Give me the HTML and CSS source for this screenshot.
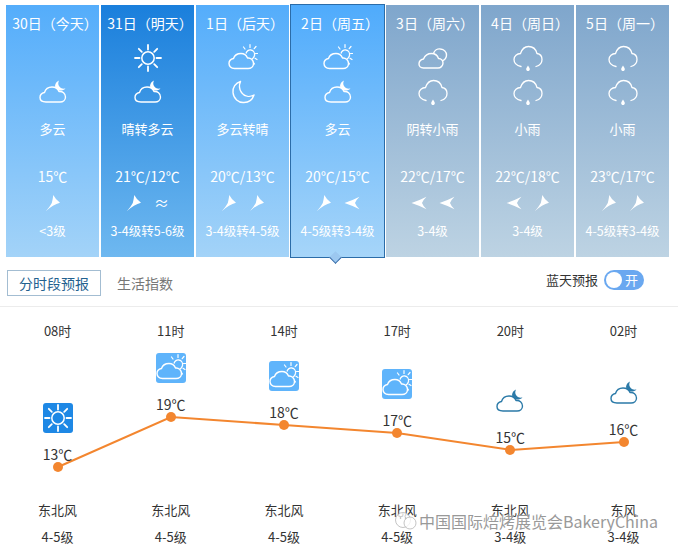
FILE: index.html
```html
<!DOCTYPE html>
<html lang="zh-CN">

<head>
    <meta charset="UTF-8">
    <meta name="viewport" content="width=device-width, initial-scale=1.0">
    <title>天气预报</title>
    <link rel="stylesheet" href="styles.css">
</head>

<body>
    <svg class="defs">
        <defs>
            <symbol id="sun" viewBox="0 0 30 30">
                <circle cx="15" cy="15" r="6.200" fill="none" stroke="currentColor" stroke-width="1.500" />
                <path d="M15 2v4.500M15 23.500v4.500M2 15h4.500M23.500 15h4.500M5.800 5.800l3 3M21.200 21.200l3 3M5.800 24.200l3-3M21.200 8.800l3-3" stroke="currentColor" stroke-width="1.800" stroke-linecap="round" fill="none" />
            </symbol>
            <symbol id="cloudmoon" viewBox="0 0 30 30">
                <path d="M8 25C4 25 2 23 2 20.500C2 18 4 16 6.500 15.500C7.500 12 10.500 10 14 10C17.500 10 20 12 21 14.500C24.500 14 27.500 16.500 27.500 20C27.500 23 25 25 22 25Z" fill="none" stroke="currentColor" stroke-width="1.400" stroke-linejoin="round" />
                <path d="M21 3.500C17.500 5 16 9 18 11.500C20 14 24.500 14.500 27.500 11.500C24.500 12 22 11 21 9C20 7.500 20 5.500 21 3.500Z" fill="currentColor" />
            </symbol>
            <symbol id="cloudsun" viewBox="0 0 30 30">
                <path d="M6.500 25.500C3 25.500 1 23 1 20.500C1 18 3 16 5.500 15.500C6.500 12.500 9.500 10.500 13 10.500C16 10.500 18.500 12.500 19.500 15C22.500 14.500 25.500 17 25.500 20.500C25.500 23.500 23 25.500 20 25.500Z" fill="none" stroke="currentColor" stroke-width="1.400" stroke-linejoin="round" />
                <path d="M18 10.500C18.500 8 21 6.500 23 7C25.500 7.500 27 10 26.500 12.500C26 14.500 25 15.500 24 16" fill="none" stroke="currentColor" stroke-width="1.300" />
                <path d="M22 1.500v3M15.500 4l1.500 2M28 3.500l-1.800 2.200M29.500 10.500h-2M29 16.500l-2-1.200M26.500 21l-.8-1.200" stroke="currentColor" stroke-width="1.200" stroke-linecap="round" fill="none" />
            </symbol>
            <symbol id="moon" viewBox="0 0 30 30">
                <path d="M12.500 4.500C7.500 6 4.500 10.500 5 15.500C5.500 21.500 10.500 26 16 25.500C20.500 25.500 24.500 22.500 26 18C21.500 20.500 16.500 19.500 13.500 15.500C11 12 11 8 12.500 4.500Z" fill="none" stroke="currentColor" stroke-width="1.400" stroke-linejoin="round" />
            </symbol>
            <symbol id="overcast" viewBox="0 0 30 30">
                <path d="M5.500 25C2.500 25 1 23 1 21C1 18.500 3 16.500 5.500 16C7 12.500 10 10.500 13.500 10.500C17 10.500 19.500 12.500 20.500 15.500C23 15.500 25 17.500 25 20C25 23 22.500 25 20 25Z" fill="none" stroke="currentColor" stroke-width="1.400" stroke-linejoin="round" />
                <path d="M15.500 10.500C16.500 7.500 19.500 5.500 22.500 6C26 6.500 28.500 9 28.500 12C28.500 15 26.500 17 24 18" fill="none" stroke="currentColor" stroke-width="1.400" />
            </symbol>
            <symbol id="rain" viewBox="0 0 30 30">
                <path d="M8 23.500C3.500 22.500 1 20 1 16.500C1 13 4 10.500 7.500 10.500C9 6 12 3.500 15.500 3.500C20 3.500 23 6.500 24 10.500C27 11 29 13.500 29 16.500C29 20 26.500 22.500 23 23.500" fill="none" stroke="currentColor" stroke-width="1.300" stroke-linecap="round" />
                <path d="M15 22.500C15.800 24 16.800 25 16.800 26.200C16.800 27.200 16 28 15 28C14 28 13.200 27.200 13.200 26.200C13.200 25 14.200 24 15 22.500Z" fill="currentColor" />
            </symbol>
            <symbol id="arrow_ne" viewBox="0 0 16 18">
                <path d="M8.300 1Q10.500 5.500 15 8.700Q8 10.500 1 17Q5 12.500 6.800 9Q7.800 5 8.300 1Z" fill="currentColor" />
            </symbol>
            <symbol id="arrow_w" viewBox="0 0 16 18">
                <path d="M.5 9Q8 6.500 15.500 2.700Q12 6 11 9Q12 12 15.500 15.200Q8 11.500 .5 9Z" fill="currentColor" />
            </symbol>
        </defs>
    </svg>

    <div class="week">
        <div class="day">
            <p class="date">30日（今天）</p>
            <div class="icons"><svg class="ico"><use href="#cloudmoon" /></svg></div>
            <p class="wea">多云</p>
            <p class="tem">15℃</p>
            <div class="winds"><svg class="arr"><use href="#arrow_ne" /></svg></div>
            <p class="lev">&lt;3级</p>
        </div>
        <div class="day day_next">
            <p class="date">31日（明天）</p>
            <div class="icons"><svg class="ico"><use href="#sun" /></svg><svg class="ico"><use href="#cloudmoon" /></svg></div>
            <p class="wea">晴转多云</p>
            <p class="tem">21℃/12℃</p>
            <div class="winds"><svg class="arr"><use href="#arrow_ne" /></svg><span class="calm">≈</span></div>
            <p class="lev">3-4级转5-6级</p>
        </div>
        <div class="day">
            <p class="date">1日（后天）</p>
            <div class="icons"><svg class="ico"><use href="#cloudsun" /></svg><svg class="ico"><use href="#moon" /></svg></div>
            <p class="wea">多云转晴</p>
            <p class="tem">20℃/13℃</p>
            <div class="winds"><svg class="arr"><use href="#arrow_ne" /></svg><svg class="arr"><use href="#arrow_ne" /></svg></div>
            <p class="lev">3-4级转4-5级</p>
        </div>
        <div class="day day_sel">
            <p class="date">2日（周五）</p>
            <div class="icons"><svg class="ico"><use href="#cloudsun" /></svg><svg class="ico"><use href="#cloudmoon" /></svg></div>
            <p class="wea">多云</p>
            <p class="tem">20℃/15℃</p>
            <div class="winds"><svg class="arr"><use href="#arrow_ne" /></svg><svg class="arr"><use href="#arrow_w" /></svg></div>
            <p class="lev">4-5级转3-4级</p>
        </div>
        <div class="day day_far">
            <p class="date">3日（周六）</p>
            <div class="icons"><svg class="ico"><use href="#overcast" /></svg><svg class="ico"><use href="#rain" /></svg></div>
            <p class="wea">阴转小雨</p>
            <p class="tem">22℃/17℃</p>
            <div class="winds"><svg class="arr"><use href="#arrow_w" /></svg><svg class="arr"><use href="#arrow_w" /></svg></div>
            <p class="lev">3-4级</p>
        </div>
        <div class="day day_far">
            <p class="date">4日（周日）</p>
            <div class="icons"><svg class="ico"><use href="#rain" /></svg><svg class="ico"><use href="#rain" /></svg></div>
            <p class="wea">小雨</p>
            <p class="tem">22℃/18℃</p>
            <div class="winds"><svg class="arr"><use href="#arrow_w" /></svg><svg class="arr"><use href="#arrow_ne" /></svg></div>
            <p class="lev">3-4级</p>
        </div>
        <div class="day day_far">
            <p class="date">5日（周一）</p>
            <div class="icons"><svg class="ico"><use href="#rain" /></svg><svg class="ico"><use href="#rain" /></svg></div>
            <p class="wea">小雨</p>
            <p class="tem">23℃/17℃</p>
            <div class="winds"><svg class="arr"><use href="#arrow_ne" /></svg><svg class="arr"><use href="#arrow_ne" /></svg></div>
            <p class="lev">4-5级转3-4级</p>
        </div>
    </div>

    <div class="tabs">
        <span class="tab tab_on">分时段预报</span>
        <span class="tab">生活指数</span>
        <div class="sky">
            <span>蓝天预报</span>
            <span class="switch"><i></i>开</span>
        </div>
    </div>

    <div class="chart">
        <!-- 折线 -->
        <svg class="line" width="678" height="245">
            <polyline points="58,160 171,110 284,118 397,126 511,143 624,135" fill="none" stroke="#f3862f" stroke-width="2" />
        </svg>
        <div class="hour">
            <p class="h_time">08时</p>
            <div class="h_box" style="padding-top: 62px"><div class="h_ico h_sun"><svg><use href="#sun" /></svg></div><p class="h_tem">13℃</p><i class="dot"></i></div>
            <p class="h_wind">东北风</p>
            <p class="h_lev">4-5级</p>
        </div>
        <div class="hour">
            <p class="h_time">11时</p>
            <div class="h_box" style="padding-top: 12px"><div class="h_ico h_cloud"><svg><use href="#cloudsun" /></svg></div><p class="h_tem">19℃</p><i class="dot"></i></div>
            <p class="h_wind">东北风</p>
            <p class="h_lev">4-5级</p>
        </div>
        <div class="hour">
            <p class="h_time">14时</p>
            <div class="h_box" style="padding-top: 20px"><div class="h_ico h_cloud"><svg><use href="#cloudsun" /></svg></div><p class="h_tem">18℃</p><i class="dot"></i></div>
            <p class="h_wind">东北风</p>
            <p class="h_lev">4-5级</p>
        </div>
        <div class="hour">
            <p class="h_time">17时</p>
            <div class="h_box" style="padding-top: 28px"><div class="h_ico h_cloud"><svg><use href="#cloudsun" /></svg></div><p class="h_tem">17℃</p><i class="dot"></i></div>
            <p class="h_wind">东北风</p>
            <p class="h_lev">4-5级</p>
        </div>
        <div class="hour">
            <p class="h_time">20时</p>
            <div class="h_box" style="padding-top: 45px"><div class="h_ico h_night"><svg><use href="#cloudmoon" /></svg></div><p class="h_tem">15℃</p><i class="dot"></i></div>
            <p class="h_wind">东北风</p>
            <p class="h_lev">3-4级</p>
        </div>
        <div class="hour">
            <p class="h_time">02时</p>
            <div class="h_box" style="padding-top: 37px"><div class="h_ico h_night"><svg><use href="#cloudmoon" /></svg></div><p class="h_tem">16℃</p><i class="dot"></i></div>
            <p class="h_wind">东风</p>
            <p class="h_lev">3-4级</p>
        </div>
        <!-- 水印 -->
        <div class="mark">
            <svg width="24" height="20" viewBox="0 0 24 20">
                <circle cx="9" cy="9" r="7.500" fill="#fff" fill-opacity=".75" stroke="#b5b5b5" stroke-width=".8" />
                <circle cx="16" cy="12" r="6" fill="#fff" fill-opacity=".75" stroke="#b5b5b5" stroke-width=".8" />
                <circle cx="6.500" cy="7" r=".8" fill="#aaa" />
                <circle cx="11.500" cy="7" r=".8" fill="#aaa" />
            </svg>
            <span>中国国际焙烤展览会BakeryChina</span>
        </div>
    </div>
</body>

</html>
```

FILE: styles.css
```css
* {
    padding: 0;
    margin: 0;
    box-sizing: border-box;
}

body {
    width: 678px;
    height: 552px;
    overflow: hidden;
    background: #fff;
    font-family: "Noto Sans CJK SC", "Liberation Sans", sans-serif;
    font-size: 14px;
    color: #333;
}

.defs {
    display: none;
}

.week {
    display: flex;
    gap: 2px;
    margin: 5px 0 0 6px;
    height: 252px;
}

.day {
    position: relative;
    width: 93px;
    height: 252px;
    color: #fff;
    text-align: center;
    background: linear-gradient(#54adfb, #a3d3f8);
}

.day_next {
    background: linear-gradient(#1a7fdc, #6eb8f0);
}

.day_far {
    background: linear-gradient(#7fa6cc, #bdd3e3);
}

.day_sel {
    width: 95px;
    height: 254px;
    margin: -1px -1px 0 -1px;
    border: 1px solid #2b6ca8;
    background: linear-gradient(#4fabfc, #a6d5f9);
}

.day_sel::after {
    content: "";
    position: absolute;
    left: 40px;
    bottom: -5px;
    width: 8px;
    height: 8px;
    transform: rotate(45deg);
    border-right: 1px solid #3d6fa8;
    border-bottom: 1px solid #3d6fa8;
    background: #9cc8f0;
}

.date {
    height: 20px;
    margin-top: 8px;
    padding-left: 5px;
    line-height: 20px;
    white-space: nowrap;
}

.icons {
    display: flex;
    flex-direction: column;
    justify-content: flex-end;
    align-items: center;
    gap: 4px;
    height: 74px;
}

.ico {
    width: 30px;
    height: 30px;
}

.wea {
    height: 20px;
    margin-top: 12px;
    line-height: 20px;
    font-size: 13px;
}

.tem {
    height: 20px;
    margin-top: 27px;
    line-height: 20px;
    font-size: 14px;
    white-space: nowrap;
}

.winds {
    display: flex;
    justify-content: center;
    align-items: center;
    gap: 12px;
    height: 18px;
    margin-top: 8px;
}

.arr {
    width: 16px;
    height: 18px;
}

.calm {
    width: 16px;
    font-size: 15px;
    line-height: 18px;
}

.lev {
    height: 18px;
    margin-top: 10px;
    line-height: 18px;
    font-size: 12.500px;
    white-space: nowrap;
}

.tabs {
    display: flex;
    align-items: center;
    height: 50px;
    padding: 0 7px;
    border-bottom: 1px solid #ececec;
}

.tab {
    height: 26px;
    margin-top: 2px;
    line-height: 24px;
    font-size: 14px;
    color: #777;
    border: 1px solid transparent;
}

.tab_on {
    width: 94px;
    margin-right: 15px;
    text-align: center;
    color: #23618f;
    border-color: #a3bdd2;
}

.sky {
    display: flex;
    align-items: center;
    gap: 6px;
    margin-left: auto;
    margin-right: 27px;
    margin-bottom: 4px;
    font-size: 13px;
}

.switch {
    display: flex;
    align-items: center;
    width: 40px;
    height: 20px;
    padding-left: 2px;
    border-radius: 10px;
    background: #6aa8f0;
    color: #fff;
    font-size: 13px;
}

.switch i {
    width: 16px;
    height: 16px;
    margin-right: 3px;
    border-radius: 50%;
    background: #fff;
}

.chart {
    position: relative;
    display: flex;
    padding-left: 1px;
}

.line {
    position: absolute;
    left: 0;
    top: 0;
}

.hour {
    position: relative;
    display: flex;
    flex: none;
    flex-direction: column;
    align-items: center;
    width: 113.200px;
    text-align: center;
}

.h_time {
    height: 20px;
    margin-top: 14px;
    line-height: 20px;
    font-size: 13px;
}

.h_box {
    display: flex;
    flex-direction: column;
    align-items: center;
    width: 60px;
    height: 159px;
}

.h_ico {
    width: 30px;
    height: 30px;
    flex: none;
    border-radius: 3px;
}

.h_ico svg {
    display: block;
    width: 30px;
    height: 30px;
}

.h_sun {
    background: #1e88e5;
    color: #fff;
}

.h_cloud {
    background: #5fb4fb;
    color: #fff;
}

.h_night {
    color: #2b7aa8;
}

.h_tem {
    height: 20px;
    margin-top: 11px;
    line-height: 20px;
    font-size: 14px;
}

.dot {
    width: 10px;
    height: 10px;
    margin-top: -2px;
    border-radius: 50%;
    background: #f3862f;
}

.h_wind {
    height: 20px;
    line-height: 20px;
    font-size: 13px;
}

.h_lev {
    height: 20px;
    margin-top: 7px;
    line-height: 20px;
    font-size: 13px;
}

.mark {
    position: absolute;
    left: 394px;
    top: 202px;
    display: flex;
    align-items: center;
    gap: 1px;
    white-space: nowrap;
    font-size: 16px;
    color: #999;
    text-shadow: 0 0 2px #fff;
}
```
